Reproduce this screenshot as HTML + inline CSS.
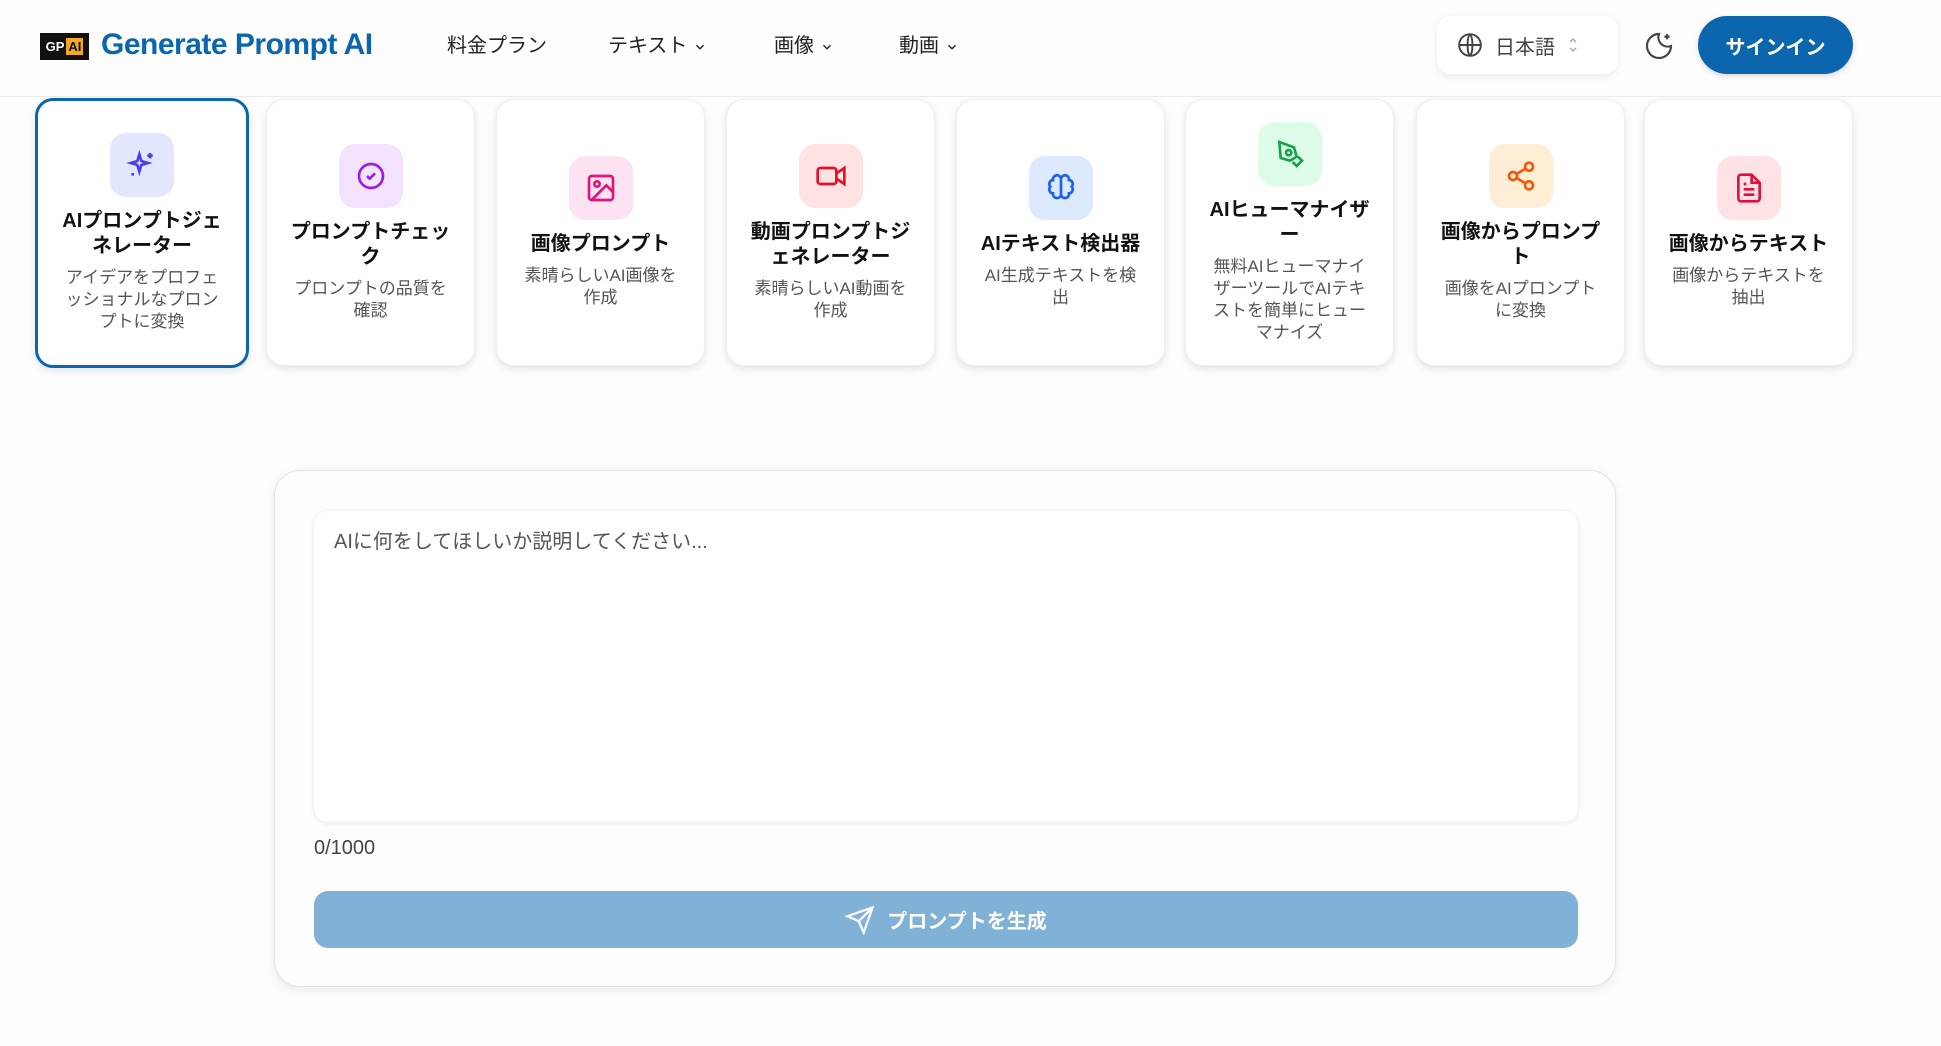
<!DOCTYPE html>
<html><head><meta charset="utf-8"><style>
*{box-sizing:border-box;margin:0;padding:0}
body{width:1941px;height:1046px;background:#fdfdfd;font-family:"Liberation Sans","Noto Sans CJK JP",sans-serif;color:#111;position:relative;overflow:hidden}
.hdr{position:absolute;left:0;top:0;width:1941px;height:97px;border-bottom:1px solid #ececec;background:#fdfdfd}
.logo{position:absolute;left:40px;top:33px;width:49px;height:27px;background:#111;display:flex;align-items:center;justify-content:center;gap:2px;font-size:13px;font-weight:bold;color:#fff}
.logo b{background:#f5a623;color:#111;padding:1px 2px}
.brand{position:absolute;left:101px;top:28px;font-size:30px;font-weight:bold;color:#0b66ae;letter-spacing:-0.5px}
.nav{position:absolute;top:29px;font-size:20px;color:#222}
.nav svg{vertical-align:middle;margin-left:6px}
.lang{position:absolute;left:1437px;top:16px;width:181px;height:58px;border-radius:14px;background:#fff;box-shadow:0 2px 8px rgba(0,0,0,.08);font-size:20px;color:#444;display:flex;align-items:center;padding-left:20px;gap:12px}
.sign{position:absolute;left:1698px;top:16px;width:155px;height:58px;border-radius:29px;background:#0b66ae;color:#fff;font-weight:bold;font-size:20px;display:flex;align-items:center;justify-content:center;box-shadow:0 2px 6px rgba(0,0,0,.15)}
.card{position:absolute;top:99px;width:209px;height:267px;border-radius:18px;background:#fff;box-shadow:0 3px 8px rgba(0,0,0,.1);border:1px solid #eee;display:flex;flex-direction:column;align-items:center;justify-content:center;text-align:center;padding:0 22px}
.card.act{border:3px solid #0b66ae;left:35px;width:214px;top:98px;height:270px}
.ic{width:64px;height:64px;border-radius:16px;display:flex;align-items:center;justify-content:center;margin-bottom:12px}
.t{font-size:20px;font-weight:bold;line-height:25px}
.d{font-size:17px;color:#555;line-height:22px;margin-top:8px;padding:0 3px}
.panel{position:absolute;left:274px;top:470px;width:1342px;height:517px;border-radius:26px;border:1px solid #e4e4e4;background:#fdfdfd;box-shadow:0 3px 10px rgba(0,0,0,.08)}
.ta{position:absolute;left:39px;top:40px;width:1264px;height:311px;border-radius:14px;background:#fff;box-shadow:0 1px 5px rgba(0,0,0,.1);padding:14px 20px;font-size:20px;color:#555}
.cnt{position:absolute;left:39px;top:366px;font-size:20px;color:#444}
.btn{position:absolute;left:39px;top:420px;width:1264px;height:57px;border-radius:14px;background:#80b1d7;color:#fff;font-size:20px;font-weight:bold;display:flex;align-items:center;justify-content:center;gap:12px}
</style></head><body>
<div class="hdr">
<div class="logo">GP<b>AI</b></div>
<div class="brand">Generate Prompt AI</div>
<div class="nav" style="left:447px">料金プラン</div>
<div class="nav" style="left:608px">テキスト<svg width="14" height="14" viewBox="0 0 24 24" fill="none" stroke="#222" stroke-width="2.5"><path d="M6 9l6 6 6-6"/></svg></div>
<div class="nav" style="left:774px">画像<svg width="14" height="14" viewBox="0 0 24 24" fill="none" stroke="#222" stroke-width="2.5"><path d="M6 9l6 6 6-6"/></svg></div>
<div class="nav" style="left:899px">動画<svg width="14" height="14" viewBox="0 0 24 24" fill="none" stroke="#222" stroke-width="2.5"><path d="M6 9l6 6 6-6"/></svg></div>
<div class="lang"><svg width="26" height="26" viewBox="0 0 24 24" fill="none" stroke="#444" stroke-width="1.8"><circle cx="12" cy="12" r="10"/><path d="M2 12h20M12 2c3 3 3 17 0 20M12 2c-3 3-3 17 0 20"/></svg>日本語<svg width="12" height="18" viewBox="0 0 12 18" fill="none" stroke="#aaa" stroke-width="1.5"><path d="M3 6l3-3 3 3M3 12l3 3 3-3"/></svg></div>
<svg style="position:absolute;left:1643px;top:30px" width="32" height="32" viewBox="0 0 24 24" fill="none" stroke="#444" stroke-width="1.6"><path d="M12 3a7 7 0 0 0 9 9 9 9 0 1 1-9-9z"/><path d="M18 3v4M16 5h4"/></svg>
<div class="sign">サインイン</div>
</div>

<div class="card act"><div class="ic" style="background:#e2e6ff"><svg width="32" height="32" viewBox="0 0 24 24" fill="none" stroke="#4f3ee8" stroke-width="2"><path d="M10 4l1.5 5 5 1.5-5 1.5-1.5 5-1.5-5-5-1.5 5-1.5z"/><path d="M18 3v4M16 5h4M5 18v2"/></svg></div><div class="t">AIプロンプトジェネレーター</div><div class="d">アイデアをプロフェッショナルなプロンプトに変換</div></div>
<div class="card" style="left:266px"><div class="ic" style="background:#f3e3ff"><svg width="32" height="32" viewBox="0 0 24 24" fill="none" stroke="#9b1fe0" stroke-width="2"><circle cx="12" cy="12" r="9"/><path d="M9 12l2 2 4-4"/></svg></div><div class="t">プロンプトチェック</div><div class="d">プロンプトの品質を確認</div></div>
<div class="card" style="left:496px"><div class="ic" style="background:#fde3f1"><svg width="32" height="32" viewBox="0 0 24 24" fill="none" stroke="#e0157a" stroke-width="2"><rect x="3" y="3" width="18" height="18" rx="2"/><circle cx="9" cy="9" r="2"/><path d="M21 15l-5-5L5 21"/></svg></div><div class="t">画像プロンプト</div><div class="d">素晴らしいAI画像を作成</div></div>
<div class="card" style="left:726px"><div class="ic" style="background:#ffe2e2"><svg width="32" height="32" viewBox="0 0 24 24" fill="none" stroke="#e0112b" stroke-width="2"><rect x="2" y="6" width="14" height="12" rx="2"/><path d="M16 10l6-4v12l-6-4"/></svg></div><div class="t">動画プロンプトジェネレーター</div><div class="d">素晴らしいAI動画を作成</div></div>
<div class="card" style="left:956px"><div class="ic" style="background:#dce9ff"><svg width="32" height="32" viewBox="0 0 24 24" fill="none" stroke="#1d5ff0" stroke-width="2"><path d="M12 5a3 3 0 0 0-6 1 3 3 0 0 0-2 5 3 3 0 0 0 2 5 3 3 0 0 0 6 1zM12 5a3 3 0 0 1 6 1 3 3 0 0 1 2 5 3 3 0 0 1-2 5 3 3 0 0 1-6 1zM12 5v13"/></svg></div><div class="t">AIテキスト検出器</div><div class="d">AI生成テキストを検出</div></div>
<div class="card" style="left:1185px"><div class="ic" style="background:#dcfce7"><svg width="32" height="32" viewBox="0 0 24 24" fill="none" stroke="#16a34a" stroke-width="2"><path d="M4 3l11 4 2 7-5 3-7-2z"/><circle cx="11" cy="11" r="2"/><path d="M14 18l3 3 4-4-3-3"/></svg></div><div class="t">AIヒューマナイザー</div><div class="d">無料AIヒューマナイザーツールでAIテキストを簡単にヒューマナイズ</div></div>
<div class="card" style="left:1416px"><div class="ic" style="background:#ffedd5"><svg width="32" height="32" viewBox="0 0 24 24" fill="none" stroke="#f05a0a" stroke-width="2"><circle cx="18" cy="5" r="3"/><circle cx="6" cy="12" r="3"/><circle cx="18" cy="19" r="3"/><path d="M8.6 13.5l6.8 4M15.4 6.5l-6.8 4"/></svg></div><div class="t">画像からプロンプト</div><div class="d">画像をAIプロンプトに変換</div></div>
<div class="card" style="left:1644px"><div class="ic" style="background:#ffe2e6"><svg width="32" height="32" viewBox="0 0 24 24" fill="none" stroke="#e0113f" stroke-width="2"><path d="M14 2H6a2 2 0 0 0-2 2v16a2 2 0 0 0 2 2h12a2 2 0 0 0 2-2V8z"/><path d="M14 2v6h6M8 13h8M8 17h8M8 9h2"/></svg></div><div class="t">画像からテキスト</div><div class="d">画像からテキストを抽出</div></div>

<div class="panel">
<div class="ta">AIに何をしてほしいか説明してください...</div>
<div class="cnt">0/1000</div>
<div class="btn"><svg width="30" height="30" viewBox="0 0 24 24" fill="none" stroke="#fff" stroke-width="1.8"><path d="M22 2L11 13M22 2l-7 20-4-9-9-4z"/></svg>プロンプトを生成</div>
</div>
</body></html>
